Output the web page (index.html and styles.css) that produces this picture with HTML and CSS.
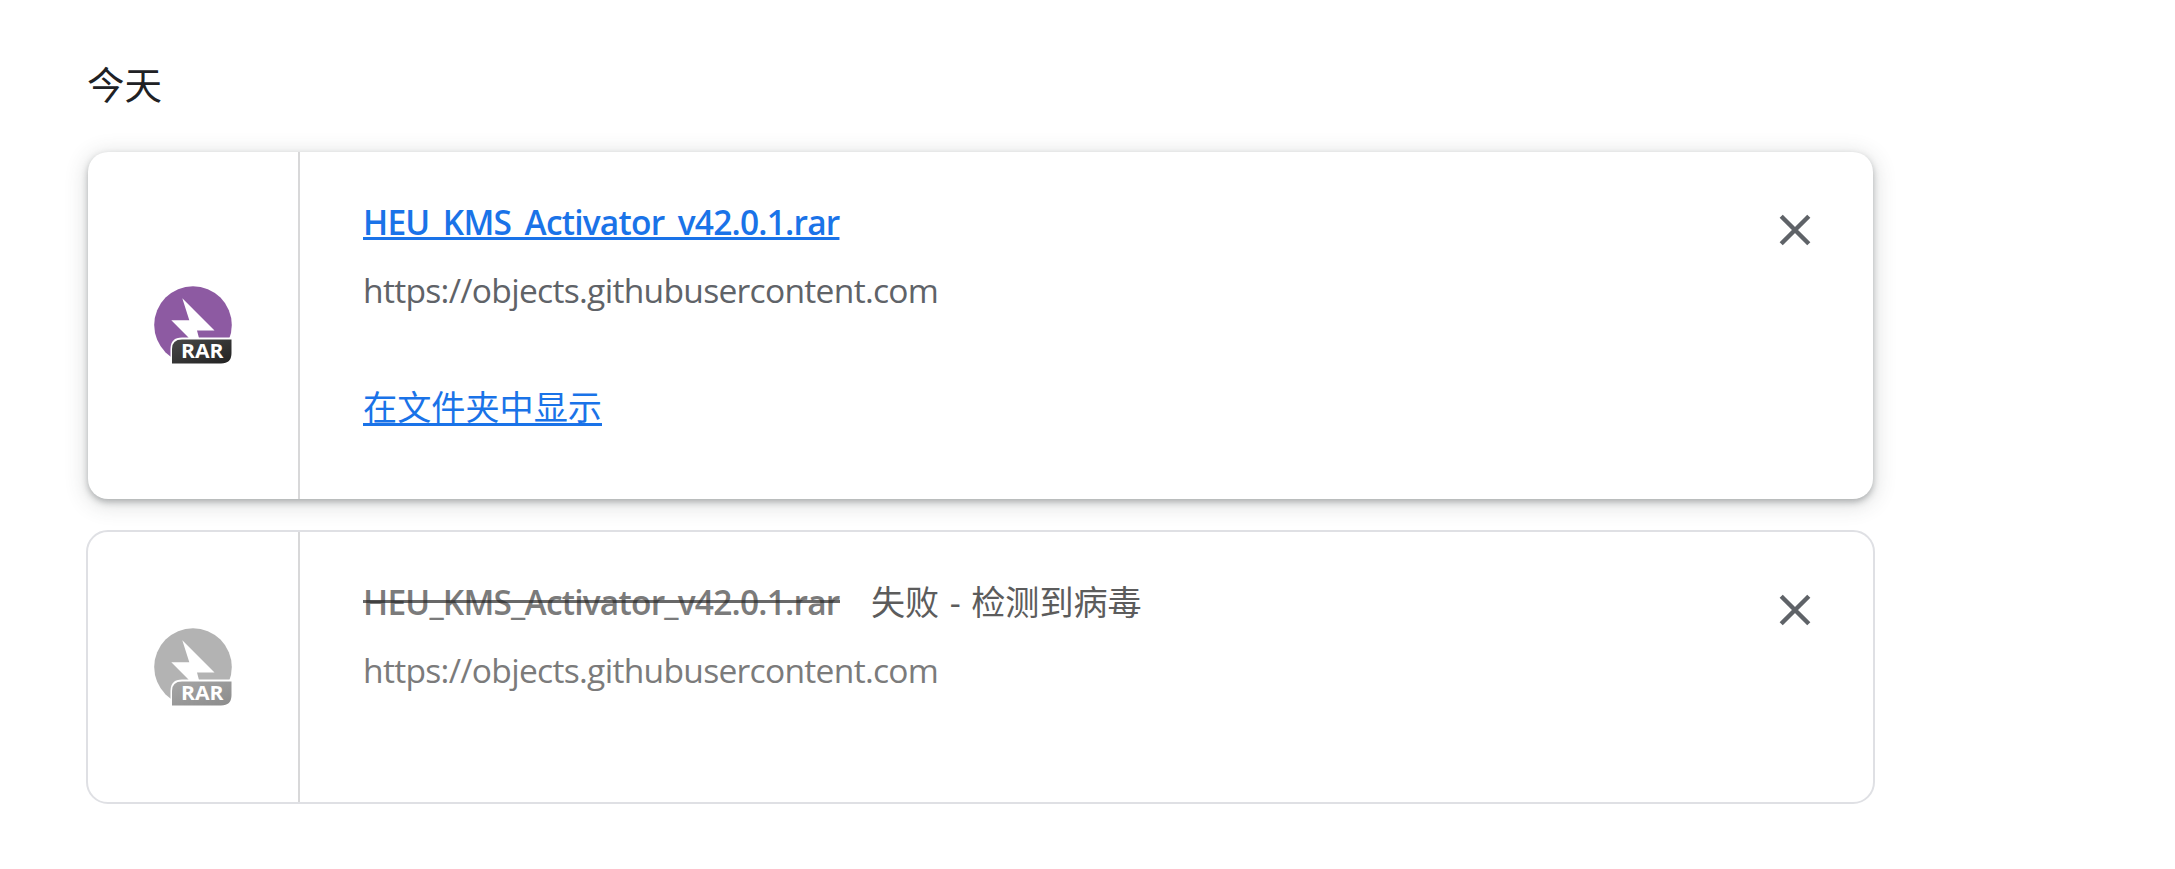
FILE: index.html
```html
<!DOCTYPE html>
<html lang="zh-CN">
<head>
<meta charset="utf-8">
<title>下载内容</title>
<link rel="stylesheet" href="styles.css">
</head>
<body>
<svg class="defs" aria-hidden="true">
  <defs>
    <linearGradient id="dark" x1="0" y1="0" x2="1" y2="1"><stop offset="0" stop-color="#484848"/><stop offset="1" stop-color="#222"/></linearGradient>
    <linearGradient id="light" x1="0" y1="0" x2="1" y2="1"><stop offset="0" stop-color="#a6a6a6"/><stop offset="1" stop-color="#8c8c8c"/></linearGradient>
    <symbol id="close" viewBox="0 0 32 32"><path d="M2.2 2.2L29.8 29.8M29.8 2.2L2.2 29.8" fill="none" stroke="currentColor" stroke-width="4.4"/></symbol>
  </defs>
</svg>
<main class="downloads">
  <h1 class="date">今天</h1>
  <article class="card card-active">
    <div class="file-icon">
      <svg width="78" height="78" viewBox="0 0 78 78">
        <circle cx="39" cy="39" r="38.8" fill="#8d5aa2"/>
        <path d="M28.3 12.3L60.5 44.5H43L45.5 54H36L34 51L17.3 34.3H35.3Z" fill="#fff"/>
        <path d="M16.5 78V63Q16.5 51.5 28 51.5H78V78Z" fill="#fff"/>
        <path d="M18 77.5V63Q18 53.5 28 53.5H77.5V67Q77.5 77.5 67 77.5Z" fill="url(#dark)"/>
        <text class="badge" x="27" y="72.2" textLength="42.5" lengthAdjust="spacingAndGlyphs">RAR</text>
      </svg>
    </div>
    <div class="details">
      <div class="title-row"><a class="name link">HEU_KMS_Activator_v42.0.1.rar</a></div>
      <div class="url">https://objects.githubusercontent.com</div>
      <div class="actions"><a class="link">在文件夹中显示</a></div>
    </div>
    <div class="close"><svg width="32" height="32"><use href="#close"/></svg></div>
  </article>
  <article class="card card-failed">
    <div class="file-icon">
      <svg width="78" height="78" viewBox="0 0 78 78">
        <circle cx="39" cy="39" r="38.8" fill="#b3b3b3"/>
        <path d="M28.3 12.3L60.5 44.5H43L45.5 54H36L34 51L17.3 34.3H35.3Z" fill="#fff"/>
        <path d="M16.5 78V63Q16.5 51.5 28 51.5H78V78Z" fill="#fff"/>
        <path d="M18 77.5V63Q18 53.5 28 53.5H77.5V67Q77.5 77.5 67 77.5Z" fill="url(#light)"/>
        <text class="badge" x="27" y="72.2" textLength="42.5" lengthAdjust="spacingAndGlyphs">RAR</text>
      </svg>
    </div>
    <div class="details">
      <div class="title-row"><span class="name struck">HEU_KMS_Activator_v42.0.1.rar</span><span class="status">失败 - 检测到病毒</span></div>
      <div class="url">https://objects.githubusercontent.com</div>
    </div>
    <div class="close"><svg width="32" height="32"><use href="#close"/></svg></div>
  </article>
</main>
</body>
</html>
```
FILE: styles.css
```css
* { box-sizing: border-box; }
body {
  margin: 0;
  background: #fff;
  font-family: "Open Sans", "Noto Sans CJK SC", sans-serif;
  font-size: 34px;
  color: #5f6368;
}
.defs { display: block; width: 0; height: 0; }
.downloads { width: 1789px; margin-left: 86px; padding-top: 57px; }
.date {
  margin: 0 0 42px 1px;
  font: 400 37.5px/51px "Noto Sans CJK SC", sans-serif;
  color: #202124;
}
.card {
  display: grid;
  grid-template-columns: 210px 1fr auto;
  border: 2px solid #dfe0e4;
  border-radius: 22px;
  background: #fff;
}
.card-active {
  height: 351px;
  border-color: transparent;
  background-clip: padding-box;
  position: relative;
}
.card-active::before {
  content: "";
  position: absolute;
  inset: 0;
  border-radius: 20px;
  box-shadow: 0 3px 6px rgba(60, 64, 67, .34), 0 4px 20px 4px rgba(60, 64, 67, .15);
  pointer-events: none;
}
.card-failed { height: 274px; margin-top: 29px; }
.file-icon { display: flex; align-items: center; justify-content: center; }
.card-active .file-icon { padding-bottom: 1px; }
.badge { font: 700 19px "Open Sans", sans-serif; fill: #fff; }
.details { padding: 45px 0 0 63px; border-left: 2px solid #d8d8d9; }
.title-row { display: flex; line-height: 50px; height: 50px; white-space: nowrap; }
.name { font-size: 33.5px; font-weight: 600; letter-spacing: -.79px; }
.link {
  color: #1a73e8;
  text-decoration: underline;
  text-decoration-thickness: 3px;
  text-underline-offset: 2px;
  text-decoration-skip-ink: none;
}
.url { margin-top: 18px; line-height: 50px; white-space: nowrap; font-size: 33.6px; letter-spacing: -.71px; }
.actions {
  margin-top: 65px;
  line-height: 50px;
  font-family: "Noto Sans CJK SC", sans-serif;
  font-size: 34.15px;
}
.actions .link { text-underline-offset: 3px; }
.close { padding: 62px 62px 0 0; line-height: 0; color: #5f6368; }
.card-failed .name, .card-failed .url { color: #7b7b7b; }
.struck { position: relative; width: 477px; }
.struck::after {
  content: "";
  position: absolute;
  left: 0;
  right: 0;
  top: 23px;
  height: 3px;
  background: rgba(40, 40, 40, .7);
}
.status { margin-left: 31px; color: #5c5c5c; font-size: 34.1px; word-spacing: 1.7px; }
```
